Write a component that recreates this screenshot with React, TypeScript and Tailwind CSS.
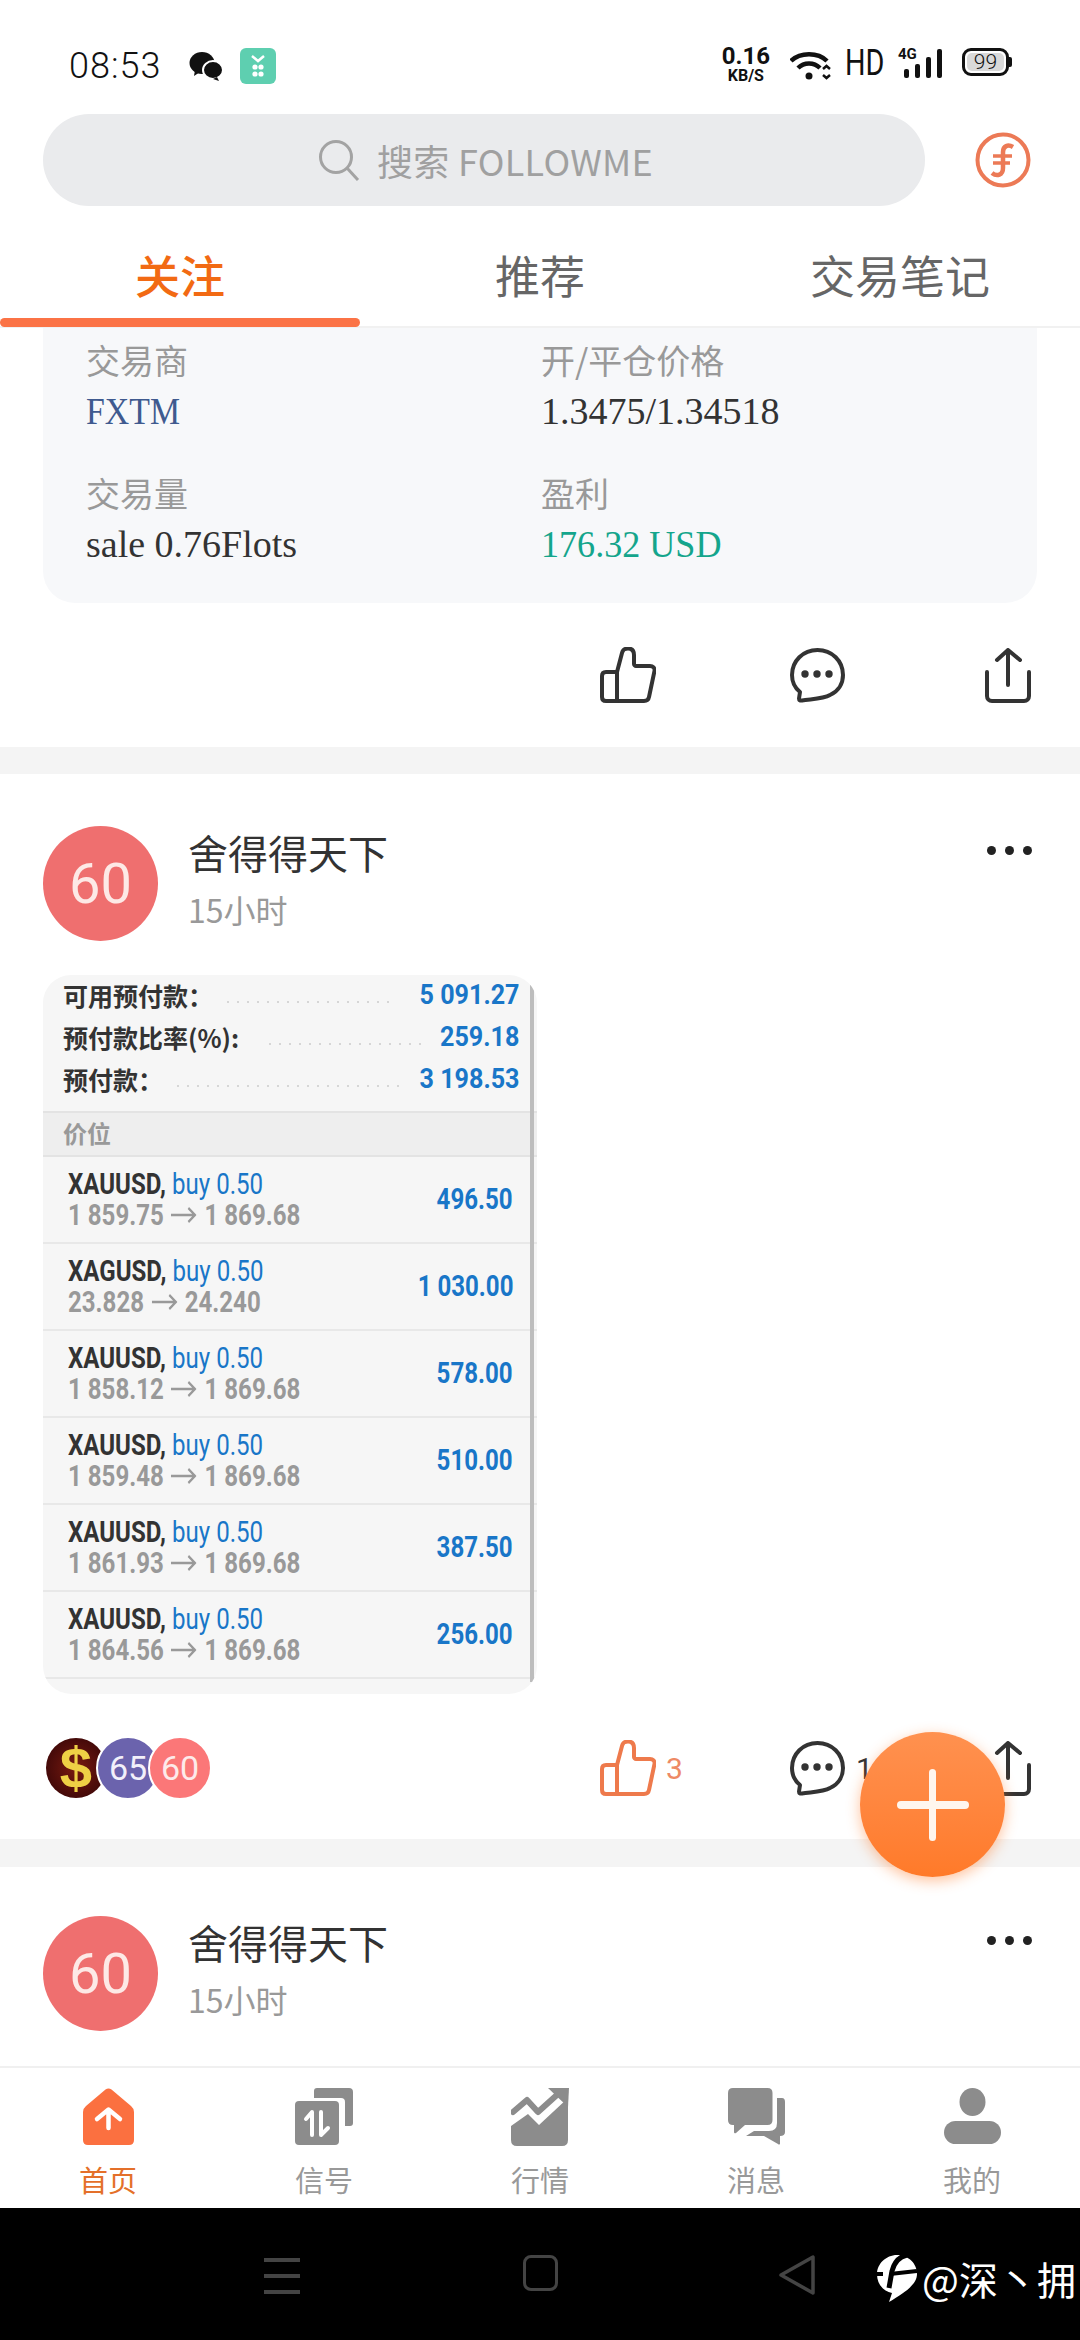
import React from "react";

const cjk = "font-['Noto_Sans_CJK_SC','Noto_Sans',sans-serif]";

function Thumb({ color = "#333" }: { color?: string }) {
  return (
    <svg width="56" height="56" viewBox="0 0 56 56" fill="none" stroke={color} strokeWidth="4" strokeLinejoin="round" strokeLinecap="round">
      <path d="M17 54 V25 L22 6 C23 2 25 1.5 28 1.5 C32 1.5 34 4 34 8 V17 C34 18 35 19 36 19 H50 C53 19 55 21 54.5 24 L49 50 C48.5 53 47 54 44 54 Z" />
      <path d="M17 25 H6 C3.5 25 2 26.5 2 29 V50 C2 52.5 3.5 54 6 54 H17" />
    </svg>
  );
}
function Comment({ color = "#333" }: { color?: string }) {
  return (
    <svg width="55" height="55" viewBox="0 0 55 55">
      <path d="M40 47 C49 43 53 35 53 27 C53 13 42 2 27.5 2 C13 2 2 13 2 27 C2 34 5 40 10 44 L9 50.5 Q9 53 12 52.5 C20 51 33 51 40 47 Z" fill="none" stroke={color} strokeWidth="4" strokeLinejoin="round" />
      <circle cx="15" cy="26" r="3.7" fill={color} />
      <circle cx="27" cy="26" r="3.7" fill={color} />
      <circle cx="39" cy="26" r="3.7" fill={color} />
    </svg>
  );
}
function Share() {
  return (
    <svg width="46" height="55" viewBox="0 0 46 55" fill="none" stroke="#333" strokeWidth="4" strokeLinecap="round" strokeLinejoin="round">
      <path d="M23 37 V2 M12 12 L23 2 L35 12" />
      <path d="M2 24 V48 C2 51 4 53 7 53 H39 C42 53 44 51 44 48 V24" />
    </svg>
  );
}
function Dots() {
  return (
    <div className="flex gap-[9px]">
      <div className="w-[9px] h-[9px] rounded-full bg-[#222]" />
      <div className="w-[9px] h-[9px] rounded-full bg-[#222]" />
      <div className="w-[9px] h-[9px] rounded-full bg-[#222]" />
    </div>
  );
}

function PostHeader() {
  return (
    <div className="flex items-start pl-[43px] pr-[48px]">
      <div className="w-[115px] h-[115px] rounded-full bg-[#ef6f6f] text-[#fde9e6] text-[56px] flex items-center justify-center font-['Roboto',sans-serif] shrink-0">60</div>
      <div className="ml-[30px] flex-1">
        <div className={`text-[40px] leading-[54px] text-[#333] -mt-[1px] ${cjk}`}>舍得得天下</div>
        <div className={`text-[32px] leading-[40px] text-[#999] mt-[10px] ${cjk}`}>15小时</div>
      </div>
      <div className="mt-[20px]"><Dots /></div>
    </div>
  );
}

const trades = [
  ["XAUUSD,", "1 859.75", "1 869.68", "496.50"],
  ["XAGUSD,", "23.828", "24.240", "1 030.00"],
  ["XAUUSD,", "1 858.12", "1 869.68", "578.00"],
  ["XAUUSD,", "1 859.48", "1 869.68", "510.00"],
  ["XAUUSD,", "1 861.93", "1 869.68", "387.50"],
  ["XAUUSD,", "1 864.56", "1 869.68", "256.00"],
];

function Summary({ label, value, gap }: { label: string; value: string; gap: string }) {
  return (
    <div className="flex items-center h-[42px] pl-[20px] pr-[18px] pb-[1px]">
      <span className={`text-[25px] font-bold text-[#333] whitespace-nowrap ${cjk}`}>{label}</span>
      <div className={`flex-1 h-[4px] mt-[12px] bg-[radial-gradient(circle,#d6d6d6_1px,transparent_1.5px)] bg-[length:10px_4px] ${gap}`} />
      <span className="inline-block origin-right scale-x-[.93] text-[27px] font-bold text-[#1976c8] whitespace-nowrap font-['Roboto',sans-serif]">{value}</span>
    </div>
  );
}

function Mt4Picture() {
  return (
    <div className="ml-[43px] w-[494px] h-[719px] rounded-[28px] overflow-hidden bg-[#f6f6f6] font-['Roboto',sans-serif] relative">
      <div className="h-[136px]">
        <Summary label="可用预付款：" value="5 091.27" gap="ml-[10px] mr-[16px]" />
        <Summary label="预付款比率(%):" value="259.18" gap="ml-[26px] mr-[6px]" />
        <Summary label="预付款：" value="3 198.53" gap="ml-[10px] mr-[12px]" />
      </div>
      <div className={`h-[46px] pb-[3px] bg-[#eeeeee] border-y-2 border-[#e3e3e3] flex items-center pl-[20px] text-[24px] font-bold text-[#999] ${cjk}`}>价位</div>
      {trades.map((t, i) => (
        <div key={i} className="h-[87px] border-b-2 border-[#e8e8e8] flex items-center justify-between pl-[25px] pr-[24px]">
          <div className="origin-left scale-x-[.83] whitespace-nowrap">
            <div className="text-[29px] leading-[31px]">
              <span className="font-bold text-[#333]">{t[0]}</span> <span className="text-[#1976c8]">buy 0.50</span>
            </div>
            <div className="text-[29px] leading-[30px] font-bold text-[#999] flex items-center gap-[9px]">
              <span>{t[1]}</span>
              <svg width="31" height="18" viewBox="0 0 31 18" fill="none" stroke="#999" strokeWidth="2.5">
                <path d="M0 9 H29 M21 2 L29 9 L21 16" />
              </svg>
              <span>{t[2]}</span>
            </div>
          </div>
          <div className="origin-right scale-x-[.83] text-[29px] font-bold text-[#1976c8] whitespace-nowrap">{t[3]}</div>
        </div>
      ))}
      <div className="border-b-0 h-[2px]" />
      <div className="absolute right-[3px] top-[10px] bottom-[12px] w-[4px] bg-[#bdbdbd]" />
    </div>
  );
}

function NavIcon({ i }: { i: number }) {
  const g = "#8c8c8c";
  if (i === 0)
    return (
      <svg width="51" height="57" viewBox="0 0 51 57">
        <path d="M22.5 1.5 Q25.5 -0.5 28.5 1.5 L48 18 Q51 20.5 51 24 V52 Q51 57 46 57 H5 Q0 57 0 52 V24 Q0 20.5 3 18 Z" fill="#fb7040" />
        <path d="M25.5 40 V22 M14 31 L25.5 21.5 L37 31" stroke="#fff" strokeWidth="4.5" fill="none" strokeLinecap="round" strokeLinejoin="round" />
      </svg>
    );
  if (i === 1)
    return (
      <svg width="58" height="57" viewBox="0 0 58 57">
        <path d="M19 3 Q19 0 22 0 H54 Q58 0 58 4 V35 Q58 38 55 38 H50 V14 Q50 10 46 10 H19 Z" fill={g} />
        <rect x="0" y="13" width="44" height="44" rx="4" fill={g} />
        <path d="M17 47 V24 L11 31 M26 24 V47 L33 40" stroke="#fff" strokeWidth="4" fill="none" strokeLinecap="round" strokeLinejoin="round" />
      </svg>
    );
  if (i === 2)
    return (
      <svg width="58" height="58" viewBox="0 0 58 58">
        <path d="M0 38 L17 26 L28 37 L57 10 V52 Q57 58 51 58 H6 Q0 58 0 52 Z" fill={g} />
        <path d="M2 24 L16 12 L27 24 L47 6" stroke={g} strokeWidth="6" fill="none" strokeLinecap="round" strokeLinejoin="round" />
        <path d="M37 0 H58 L57 19 Z" fill={g} />
      </svg>
    );
  if (i === 3)
    return (
      <svg width="57" height="57" viewBox="0 0 57 57">
        <path d="M5 0 H39.5 Q44.5 0 44.5 5 V32 Q44.5 37 39.5 37 H17 L8 45 Q6 46 6 44 V37 H5 Q0 37 0 32 V5 Q0 0 5 0 Z" fill={g} />
        <path d="M49 10 H54 Q57 10 57 14 V44 Q57 48 52 48 V56 Q51 57 50 56 L36 48 H18 L26 43 H41 Q49 43 49 35 Z" fill={g} />
      </svg>
    );
  return (
    <svg width="57" height="56" viewBox="0 0 57 56">
      <ellipse cx="28.5" cy="14" rx="13" ry="14" fill={g} />
      <rect x="0" y="33" width="57" height="23" rx="11.5" fill={g} />
    </svg>
  );
}

export default function App() {
  return (
    <div className={`w-[1080px] h-[2340px] bg-white relative overflow-hidden flex flex-col ${cjk}`}>
      {/* status bar */}
      <div className="h-[114px] shrink-0 flex items-start pt-[48px] pl-[69px] pr-[68px]">
        <span className="text-[36px] leading-[36px] text-[#111] font-['Roboto',sans-serif] font-light tracking-[1px]">08:53</span>
        <svg className="ml-[28px] mt-[4px]" width="34" height="29" viewBox="0 0 34 29" fill="#111">
          <ellipse cx="13" cy="11" rx="12.5" ry="11" />
          <path d="M6 18 L5 24 L11 20 Z" />
          <ellipse cx="24" cy="18" rx="10" ry="9" stroke="#fff" strokeWidth="2" />
          <path d="M28 25 L30 29 L24 27 Z" />
        </svg>
        <div className="ml-[17px] w-[36px] h-[36px] rounded-[6px] bg-[#5ecfb0] flex flex-col items-center justify-center gap-[2px]">
          <svg width="20" height="26" viewBox="0 0 20 26" fill="none">
            <path d="M4 3 L10 8 L16 3" stroke="#fff" strokeWidth="2.5" />
            <circle cx="7" cy="14" r="2.6" fill="#fff" />
            <circle cx="13" cy="14" r="2.6" fill="#fff" />
            <circle cx="7" cy="21" r="2.6" fill="#fff" />
            <circle cx="13" cy="21" r="2.6" fill="#fff" />
          </svg>
        </div>
        <div className="flex-1" />
        <div className="flex flex-col items-center -mt-[2px] font-['Roboto',sans-serif] text-[#111] font-bold">
          <span className="text-[24px] leading-[20px]">0.16</span>
          <span className="text-[16px] leading-[15px] mt-[2px]">KB/S</span>
        </div>
        <svg className="ml-[20px] mt-[3px]" width="42" height="30" viewBox="0 0 42 30" fill="none" stroke="#111" strokeWidth="4.5">
          <path d="M1 10 C10 1 28 1 37 10" />
          <path d="M8 17 C14 11 24 11 30 17" />
          <circle cx="19" cy="25" r="3.5" fill="#111" stroke="none" />
          <path d="M33 18 L36.5 15 L40 18 M33 24 L36.5 27 L40 24" strokeWidth="2.5" />
        </svg>
        <span className="ml-[13px] w-[36px] -mt-[3px] inline-block origin-left scale-x-[.8] text-[36px] leading-[36px] text-[#111] font-['Roboto',sans-serif]">HD</span>
        <div className="relative ml-[17px] w-[46px] h-[30px]">
          <span className="absolute left-0 top-[-1px] text-[15px] leading-[15px] font-bold text-[#111] font-['Roboto',sans-serif]">4G</span>
          <div className="absolute left-[6px] right-0 bottom-0 top-0 flex items-end gap-[6px]">
            <div className="w-[5px] h-[9px] rounded-[2px] bg-[#111]" />
            <div className="w-[5px] h-[14px] rounded-[2px] bg-[#111]" />
            <div className="w-[5px] h-[21px] rounded-[2px] bg-[#111]" />
            <div className="w-[5px] h-[29px] rounded-[2px] bg-[#111]" />
          </div>
        </div>
        <div className="ml-[18px] flex items-center">
          <div className="w-[47px] h-[28px] rounded-[9px] border-[3px] border-[#111] p-[2px]">
            <div className="w-full h-full rounded-[5px] bg-[#d9d9d9] text-[21px] leading-[18px] text-center text-[#111] font-['Roboto',sans-serif] font-light">99</div>
          </div>
          <div className="w-[3px] h-[10px] bg-[#111] rounded-r-[2px]" />
        </div>
      </div>

      {/* search */}
      <div className="h-[92px] shrink-0 flex items-center pl-[43px] pr-[49px]">
        <div className="w-[882px] h-[92px] rounded-[46px] bg-[#eaebed] flex items-center pl-[275px]">
          <svg width="42" height="42" viewBox="0 0 42 42" fill="none" stroke="#a3a3a3" strokeWidth="3">
            <circle cx="18" cy="18" r="15.5" />
            <path d="M29 29 L40 41" />
          </svg>
          <span className="ml-[17px] text-[36px] text-[#a0a0a0] tracking-[0.3px]">搜索 FOLLOWME</span>
        </div>
        <div className="flex-1 flex justify-end">
          <svg width="56" height="56" viewBox="0 0 56 56" fill="none" stroke="#ec7a56" strokeWidth="4">
            <circle cx="28" cy="28" r="25.5" />
            <path d="M38 15 C33 12 28 14 28 20 V36 C28 43 22 45 17 41" strokeWidth="4.5" />
            <path d="M18 24 H37 M18 31 H35" strokeWidth="3.5" />
          </svg>
        </div>
      </div>

      {/* tabs */}
      <div className="h-[122px] shrink-0 grid grid-cols-3 border-b-2 border-[#f1f1f1] relative">
        <div className="flex items-center justify-center text-[45px] font-medium text-[#f26a13] pt-[18px]">关注</div>
        <div className="flex items-center justify-center text-[45px] text-[#666] pt-[18px]">推荐</div>
        <div className="flex items-center justify-center text-[45px] text-[#666] pt-[18px]">交易笔记</div>
        <div className="absolute left-0 bottom-[-1px] w-[360px] h-[9px] rounded-full bg-[#fb7346]" />
      </div>

      {/* feed */}
      <div className="flex-1 overflow-hidden">
        <div className="mx-[43px] h-[275px] bg-[#f7f8fa] rounded-b-[32px] grid grid-cols-[455px_1fr] pl-[43px] content-start">
          <div className="mt-[6px]">
            <div className="text-[34px] leading-[52px] text-[#999]">交易商</div>
            <div className="text-[38px] leading-[50px] text-[#3f5a8f] font-['Liberation_Serif',serif]"><span className="inline-block origin-left scale-x-[.89]">FXTM</span></div>
          </div>
          <div className="mt-[6px]">
            <div className="text-[34px] leading-[52px] text-[#999]">开/平仓价格</div>
            <div className="text-[38px] leading-[50px] text-[#333] font-['Liberation_Serif',serif]">1.3475/1.34518</div>
          </div>
          <div className="mt-[31px]">
            <div className="text-[34px] leading-[52px] text-[#999]">交易量</div>
            <div className="text-[38px] leading-[50px] text-[#333] font-['Liberation_Serif',serif]">sale 0.76Flots</div>
          </div>
          <div className="mt-[31px]">
            <div className="text-[34px] leading-[52px] text-[#999]">盈利</div>
            <div className="text-[38px] leading-[50px] text-[#14a58c] font-['Liberation_Serif',serif]"><span className="inline-block origin-left scale-x-[.95]">176.32 USD</span></div>
          </div>
        </div>
        <div className="h-[144px] flex items-center justify-end pr-[49px]">
          <Thumb />
          <div className="ml-[134px]"><Comment /></div>
          <div className="ml-[140px]"><Share /></div>
        </div>
        <div className="h-[27px] bg-[#f4f4f4]" />
        <div className="pt-[52px]">
          <PostHeader />
          <div className="mt-[34px]"><Mt4Picture /></div>
          <div className="h-[145px] flex items-center pl-[46px] pr-[49px] pt-[3px]">
            <div className="flex items-center">
              <div className="w-[60px] h-[60px] rounded-full bg-[radial-gradient(circle,#7a1a10,#2e0306)] flex items-center justify-center text-[58px] leading-[60px] font-bold text-[#eed045] font-['Liberation_Sans',sans-serif]">$</div>
              <div className="w-[64px] h-[64px] -ml-[10px] rounded-full bg-[#6b63ad] border-2 border-white flex items-center justify-center text-[34px] text-[#f2f0fa] font-['Roboto',sans-serif]">65</div>
              <div className="w-[64px] h-[64px] -ml-[12px] rounded-full bg-[#fb7778] border-2 border-white flex items-center justify-center text-[34px] text-[#fdeaea] font-['Roboto',sans-serif]">60</div>
            </div>
            <div className="ml-[388px] w-[190px] flex items-center">
              <Thumb color="#ee7a4c" />
              <span className="ml-[10px] text-[30px] text-[#ee8a65] font-['Roboto',sans-serif]">3</span>
            </div>
            <Comment />
            <span className="ml-[11px] text-[30px] text-[#333] font-['Roboto',sans-serif]">1</span>
            <div className="flex-1" />
            <Share />
          </div>
          <div className="h-[28px] bg-[#f4f4f4]" />
          <div className="pt-[49px]"><PostHeader /></div>
        </div>
      </div>

      {/* bottom nav */}
      <div className="h-[142px] shrink-0 border-t-2 border-[#f0f0f0] bg-white grid grid-cols-5 pt-[20px]">
        {["首页", "信号", "行情", "消息", "我的"].map((l, i) => (
          <div key={l} className="flex flex-col items-center">
            <div className="h-[58px] flex items-start"><NavIcon i={i} /></div>
            <div className={`text-[29px] leading-[40px] mt-[13px] ${i === 0 ? "text-[#e4702a]" : "text-[#999]"}`}>{l}</div>
          </div>
        ))}
      </div>

      {/* system nav */}
      <div className="h-[132px] shrink-0 bg-black relative flex items-start pt-[47px]">
        <div className="ml-[264px] w-[36px] mt-[3px] flex flex-col gap-[12px]">
          <div className="h-[4px] bg-[#444]" />
          <div className="h-[4px] bg-[#444]" />
          <div className="h-[4px] bg-[#444]" />
        </div>
        <div className="ml-[223px] w-[35px] h-[36px] rounded-[8px] border-[3px] border-[#444]" />
        <svg className="ml-[220px]" width="38" height="40" viewBox="0 0 38 40" fill="none" stroke="#444" strokeWidth="3.5" strokeLinejoin="round">
          <path d="M35 2 V38 L3 20 Z" />
        </svg>
        <div className="absolute left-[877px] top-[47px] flex items-center">
          <svg width="40" height="47" viewBox="0 0 40 47">
            <path d="M20 0 C32 0 40 9 40 19 C40 29 29 37 12 47 L15 38 C6 36 0 29 0 19 C0 9 9 0 20 0 Z" fill="#fff" />
            <path d="M30 0 C21 2 17 8 15 16 L12 33" stroke="#000" strokeWidth="5" fill="none" />
            <path d="M0 19 H6 M13 19 L40 16" stroke="#000" strokeWidth="4" fill="none" />
          </svg>
          <span className="ml-[5px] text-[39px] leading-[47px] text-white whitespace-nowrap font-['Noto_Sans_CJK_SC',sans-serif]">@深丶拥</span>
        </div>
      </div>

      {/* fab */}
      <div className="absolute left-[860px] top-[1732px] w-[145px] h-[145px] rounded-full bg-gradient-to-b from-[#ff914f] to-[#ff7a29] shadow-[0_4px_14px_rgba(255,122,41,0.45)] flex items-center justify-center">
        <div className="w-[72px] h-[8px] rounded-full bg-[#fff6ee]" />
        <div className="absolute w-[7px] h-[72px] rounded-full bg-[#fff6ee]" />
      </div>
    </div>
  );
}
